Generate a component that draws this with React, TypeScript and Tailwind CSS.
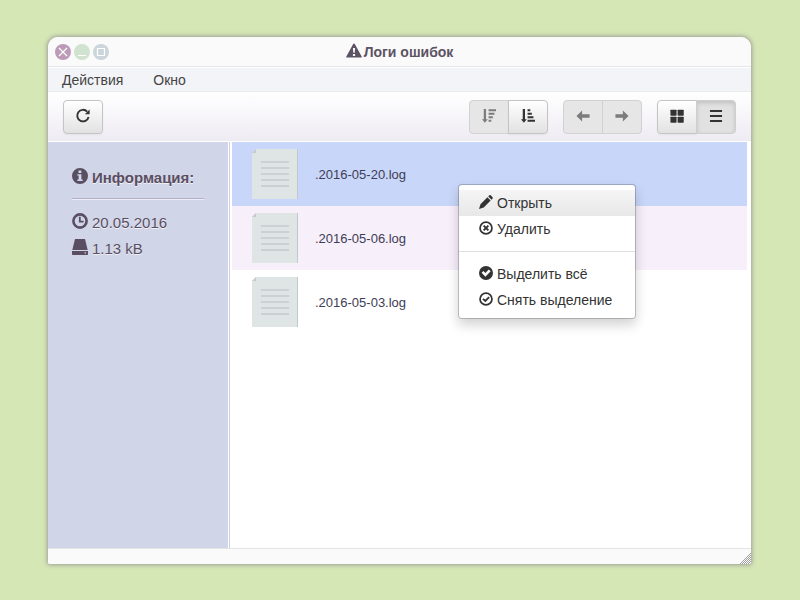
import { useState, type ReactNode } from "react";

type IconName =
  | "warning" | "refresh" | "sortDown" | "sortUp" | "left" | "right" | "grid" | "list"
  | "info" | "time" | "drive" | "pencil" | "remove" | "okFilled" | "okOutline";

const shapes: Record<IconName, ReactNode> = {
  warning: (
    <path fillRule="evenodd" d="M8 0.5 Q8.5 0.5 8.8 1 L15.8 13.8 Q16.1 14.5 15.3 14.5 H0.7 Q-0.1 14.5 0.2 13.8 L7.2 1 Q7.5 0.5 8 0.5Z M6.9 5 L7.3 9.8 H8.7 L9.1 5Z M6.9 11 V13 H9.1 V11Z" />
  ),
  refresh: (
    <>
      <path d="M12.8 3 A6.6 6.6 0 1 0 14.4 9.2" fill="none" stroke="currentColor" strokeWidth="2.2" />
      <path d="M15.6 0.5 V6 H10.1Z" />
    </>
  ),
  sortDown: (
    <path d="M2 0 H4.6 V11.6 H6.6 L3.3 15.6 L0 11.6 H2Z M7.5 0.3 H16 V2.7 H7.5Z M7.5 4.3 H14.2 V6.7 H7.5Z M7.5 8.3 H12.4 V10.7 H7.5Z M7.5 12.3 H10.6 V14.7 H7.5Z" />
  ),
  sortUp: (
    <path d="M2 0 H4.6 V11.6 H6.6 L3.3 15.6 L0 11.6 H2Z M7.5 0.3 H10.6 V2.7 H7.5Z M7.5 4.3 H12.4 V6.7 H7.5Z M7.5 8.3 H14.2 V10.7 H7.5Z M7.5 12.3 H16 V14.7 H7.5Z" />
  ),
  left: <path d="M0.5 8 L7 1.8 V6 H15.5 V10 H7 V14.2Z" />,
  right: <path d="M15.5 8 L9 1.8 V6 H0.5 V10 H9 V14.2Z" />,
  grid: (
    <>
      <rect x="0.5" y="0.8" width="7" height="6.8" rx="0.7" />
      <rect x="8.7" y="0.8" width="7" height="6.8" rx="0.7" />
      <rect x="0.5" y="8.8" width="7" height="6.8" rx="0.7" />
      <rect x="8.7" y="8.8" width="7" height="6.8" rx="0.7" />
    </>
  ),
  list: <path d="M1.1 1.1 H14.9 V3.5 H1.1Z M1.1 6.8 H14.9 V9.2 H1.1Z M1.1 12.5 H14.9 V14.9 H1.1Z" />,
  info: (
    <path fillRule="evenodd" d="M8 0 A8 8 0 1 1 8 16 A8 8 0 1 1 8 0Z M6.5 2.5 V5 H9.3 V2.5Z M5.3 6.2 V7.5 H6.6 V11.5 H5.3 V12.9 H10.7 V11.5 H9.4 V6.2Z" />
  ),
  time: (
    <>
      <circle cx="8" cy="8" r="6.6" fill="none" stroke="currentColor" strokeWidth="2.6" />
      <path d="M7.8 3.8 V8.6 H11.6" fill="none" stroke="currentColor" strokeWidth="1.8" />
    </>
  ),
  drive: (
    <>
      <path d="M3 0 H13 L15.7 11 H0.3Z" />
      <path fillRule="evenodd" d="M0 12 H16 V15.2 Q16 16 15.2 16 H0.8 Q0 16 0 15.2Z M12.6 13.3 V14.5 H14 V13.3Z" />
    </>
  ),
  pencil: <path d="M1.7 10.5 L9.6 2.6 L13.3 6.3 L5.4 14.2 L0 16Z M10.6 1.6 L11.8 0.4 Q12.6 -0.4 13.4 0.4 L15.5 2.5 Q16.3 3.3 15.5 4.1 L14.3 5.3Z" />,
  remove: (
    <>
      <circle cx="8" cy="8" r="6.8" fill="none" stroke="currentColor" strokeWidth="2" />
      <path d="M5.3 5.3 L10.7 10.7 M10.7 5.3 L5.3 10.7" stroke="currentColor" strokeWidth="2.3" />
    </>
  ),
  okFilled: (
    <path fillRule="evenodd" d="M8 0 A8 8 0 1 1 8 16 A8 8 0 1 1 8 0Z M3 7.8 L7.3 12.2 L13.3 6.1 L11.2 4 L7.3 7.9 L5.1 5.7Z" />
  ),
  okOutline: (
    <>
      <circle cx="8" cy="8" r="6.8" fill="none" stroke="currentColor" strokeWidth="2" />
      <path d="M4.6 7.8 L7.2 10.3 L11.6 5.9" fill="none" stroke="currentColor" strokeWidth="2.2" />
    </>
  ),
};

function Icon({ name, className = "size-3.5" }: { name: IconName; className?: string }) {
  return (
    <svg aria-hidden="true" viewBox="0 0 16 16" fill="currentColor" className={`shrink-0 overflow-visible ${className}`}>
      {shapes[name]}
    </svg>
  );
}

function WindowButton({ label, color, children }: { label: string; color: string; children: ReactNode }) {
  return (
    <button type="button" aria-label={label} className={`size-4 rounded-full ${color}`}>
      <svg aria-hidden="true" viewBox="0 0 16 16" className="size-4" fill="none" stroke="#fff" strokeWidth="1.2">
        {children}
      </svg>
    </button>
  );
}

type ToolState = "normal" | "disabled" | "active";

const toolStyles: Record<ToolState, string> = {
  normal: "border-[#c4c4c4] bg-linear-to-b from-white to-[#e2e2e2] text-[#333] shadow-[0_1px_2px_#0000000d]",
  disabled: "border-[#d1d1d1] bg-[#e6e6e6] text-[#7c7c7c]",
  active: "border-[#cfcfcf] bg-[#e1e1e2] text-[#333] shadow-[inset_0_2px_4px_#00000026]",
};

function ToolButton({ icon, label, state = "normal", shape = "rounded" }: { icon: IconName; label: string; state?: ToolState; shape?: string }) {
  return (
    <button
      type="button"
      aria-label={label}
      disabled={state === "disabled"}
      aria-pressed={state === "active" ? true : undefined}
      className={`flex h-[34px] w-10 items-center justify-center border pb-0.5 ${shape} ${toolStyles[state]}`}
    >
      <Icon name={icon} />
    </button>
  );
}

function FileIcon() {
  return (
    <svg aria-hidden="true" viewBox="0 0 46 50" className="h-[50px] w-[46px] shrink-0">
      <path d="M4 0 H46 V50 H0 V4Z" fill="#dfe4e4" />
      <path d="M0 4 L4 0 V4Z" fill="#c5caca" />
      <path d="M45.5 0 V50" stroke="#bfc8cc" />
      <path d="M9 13 H37 M9 19 H37 M9 25 H37 M9 31 H37 M9 37 H37" stroke="#ccd0d2" strokeWidth="2" />
    </svg>
  );
}

const files = [".2016-05-20.log", ".2016-05-06.log", ".2016-05-03.log"];
const rowColors = ["bg-[#c8d6f9]", "bg-[#f7effa]", "bg-white"];

function MenuItem({ icon, label, active = false }: { icon: IconName; label: string; active?: boolean }) {
  return (
    <button
      type="button"
      role="menuitem"
      className={`flex h-[26px] w-full items-center gap-1 px-5 whitespace-nowrap text-[#333] ${active ? "bg-linear-to-b from-[#f5f5f5] to-[#e8e8e8]" : ""}`}
    >
      <Icon name={icon} className="mb-0.5 size-3.5" />
      {label}
    </button>
  );
}

export default function App() {
  const [selected, setSelected] = useState(0);
  return (
    <div className="relative flex min-h-screen flex-col bg-[#d6e7b6] pt-[37px] pr-[49px] pb-9 pl-12 font-['Liberation_Sans',Arial,sans-serif] text-sm">
      <main className="flex flex-1 flex-col overflow-hidden rounded-t-[10px] rounded-b-xs bg-white shadow-[0_0_4px_1px_#8c8c8ccc]">
        <header className="grid h-[30px] shrink-0 grid-cols-[1fr_auto_1fr] items-center border-b border-[#e6e6e8] bg-[#fafafa] px-[7px]">
          <div className="flex gap-[3px]">
            <WindowButton label="Закрыть" color="bg-[#bd9bb8]"><path d="M4 4 L12 12 M12 4 L4 12" /></WindowButton>
            <WindowButton label="Свернуть" color="bg-[#cfe3d0]"><path d="M4 11.5 H12" /></WindowButton>
            <WindowButton label="Развернуть" color="bg-[#cbd6da]"><path d="M4.5 4.5 H11.5 V11.5 H4.5Z" /></WindowButton>
          </div>
          <h1 className="flex items-center gap-0.5 font-bold text-[#5c5364]">
            <Icon name="warning" className="mb-0.5 size-4" />
            Логи ошибок
          </h1>
        </header>

        <nav aria-label="Меню окна" className="mt-px flex h-6 shrink-0 items-center gap-[30px] border-b border-[#ebebef] bg-[#f3f4f8] px-3.5 text-[#444]">
          <button type="button">Действия</button>
          <button type="button">Окно</button>
        </nav>

        <div role="toolbar" aria-label="Панель инструментов" className="flex h-[50px] shrink-0 items-center justify-between border-b border-white bg-linear-to-b from-white to-[#eeebf3] px-[15px]">
          <ToolButton icon="refresh" label="Обновить" />
          <div className="flex gap-[15px]">
            <div className="flex">
              <ToolButton icon="sortDown" label="По убыванию" state="disabled" shape="rounded-l" />
              <ToolButton icon="sortUp" label="По возрастанию" shape="-ml-px rounded-r" />
            </div>
            <div className="flex">
              <ToolButton icon="left" label="Назад" state="disabled" shape="rounded-l" />
              <ToolButton icon="right" label="Вперёд" state="disabled" shape="-ml-px rounded-r" />
            </div>
            <div className="flex">
              <ToolButton icon="grid" label="Плитка" shape="rounded-l" />
              <ToolButton icon="list" label="Список" state="active" shape="-ml-px rounded-r" />
            </div>
          </div>
        </div>

        <div className="flex flex-1">
          <aside className="w-[180px] shrink-0 bg-[#d0d5e8] px-6 pt-6 text-[15px] text-[#5a4e62] [text-shadow:0_1px_0_#ffffffb3]">
            <h2 className="flex h-6 items-center gap-1 font-bold">
              <Icon name="info" className="mb-1 size-4" />
              Информация:
            </h2>
            <hr className="mt-2 mb-[11px] border-t border-[#b3accb] shadow-[0_1px_0_#ffffff99]" />
            <p className="flex h-[26px] items-center gap-1"><Icon name="time" className="mb-1 size-4" />20.05.2016</p>
            <p className="flex h-[26px] items-center gap-1"><Icon name="drive" className="mb-1 size-4" />1.13 kB</p>
          </aside>
          <section aria-label="Файлы" className="ml-px flex-1 border-l border-[#cdd1e5] pr-1 pl-0.5">
            <ul>
              {files.map((file, i) => (
                <li key={file}>
                  <button
                    type="button"
                    aria-pressed={selected === i}
                    onClick={() => setSelected(i)}
                    className={`flex h-16 w-full items-center gap-[17px] px-5 text-[13px] text-[#3d3d55] ${rowColors[i]}`}
                  >
                    <FileIcon />
                    <span className="pt-0.5">{file}</span>
                  </button>
                </li>
              ))}
            </ul>
          </section>
        </div>

        <footer className="flex h-4 shrink-0 items-end justify-end border-t border-[#e4e4e7] bg-[#fafafa]">
          <svg aria-hidden="true" viewBox="0 0 12 12" className="size-3">
            <defs>
              <pattern id="grip" width="2" height="2" patternUnits="userSpaceOnUse">
                <path d="M0 0 H1 V1 H0Z M1 1 H2 V2 H1Z" fill="#a0a0a0" />
              </pattern>
            </defs>
            <path d="M12 0 V12 H0Z" fill="url(#grip)" />
          </svg>
        </footer>
      </main>

      <div role="menu" aria-label="Действия с файлом" className="absolute top-[184px] left-[458px] min-w-[178px] rounded border border-[#00000033] bg-white bg-clip-padding py-[5px] shadow-[0_6px_12px_#0000002d]">
        <MenuItem icon="pencil" label="Открыть" active />
        <MenuItem icon="remove" label="Удалить" />
        <hr className="my-[9px] border-t border-[#e0e0e0]" />
        <MenuItem icon="okFilled" label="Выделить всё" />
        <MenuItem icon="okOutline" label="Снять выделение" />
      </div>
    </div>
  );
}
